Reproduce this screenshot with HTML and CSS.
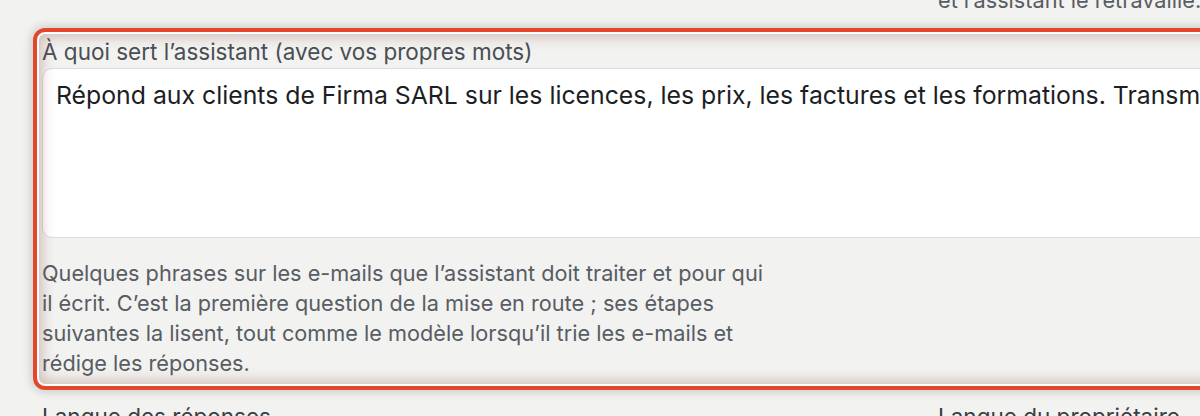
FILE: index.html
```html
<!DOCTYPE html>
<html lang="fr">
<head>
<meta charset="utf-8">
<title>Assistant</title>
<link rel="stylesheet" href="styles.css">
</head>
<body>
<div class="page">
  <div class="row prev">
    <div></div>
    <p class="hint">et l’assistant le retravaille.</p>
  </div>
  <div class="field highlighted">
    <label class="label" for="purpose">À quoi sert l’assistant (avec vos propres mots)</label>
    <textarea id="purpose" class="input" readonly>Répond aux clients de Firma SARL sur les licences, les prix, les factures et les formations. Transmet les demandes techniques à l’équipe support.</textarea>
    <p class="hint narrow">Quelques phrases sur les e-mails que l’assistant doit traiter et pour qui il écrit. C’est la première question de la mise en route ; ses étapes suivantes la lisent, tout comme le modèle lorsqu’il trie les e-mails et rédige les réponses.</p>
  </div>
  <div class="row next">
    <label class="label strong">Langue des réponses</label>
    <label class="label strong">Langue du propriétaire</label>
  </div>
</div>
</body>
</html>
```

FILE: styles.css
```css
html, body {
  margin: 0;
  padding: 0;
  background: #f2f2f0;
  overflow: hidden;
}

body {
  font-family: "Inter", "Noto Sans", "Liberation Sans", sans-serif;
  -webkit-font-smoothing: antialiased;
}

.page {
  width: 2200px;
  padding-left: 39px;
  box-sizing: border-box;
}

.row {
  display: grid;
  grid-template-columns: 848px 1fr;
  column-gap: 48px;
  padding: 0 3px;
}

.prev {
  margin-top: -15px;
}

.hint {
  margin: 0;
  font-size: 21.7px;
  line-height: 30px;
  color: #585c63;
}

.hint.narrow {
  max-width: 728px;
  margin-top: 20px;
}

.field {
  position: relative;
  margin-top: 19px;
  padding: 6px 3px 6px 3px;
}

.field.highlighted::after {
  content: "";
  position: absolute;
  top: -6px;
  left: -6px;
  right: -6px;
  bottom: -6px;
  border: 4px solid #e2472c;
  border-radius: 12px;
  box-shadow:
    inset 0 0 0 2px #ffffff,
    inset 0 0 14px 4px rgba(120, 60, 45, 0.32),
    0 0 10px 2px rgba(0, 0, 0, 0.16);
  pointer-events: none;
}

.label {
  display: block;
  font-size: 22.5px;
  line-height: 24px;
  color: #4a4e55;
  margin-bottom: 4px;
}

.label.strong {
  color: #3a3d42;
  margin-bottom: 0;
}

.input {
  display: block;
  width: 100%;
  height: 170px;
  box-sizing: border-box;
  margin: 0;
  padding: 9px 13px;
  border: 1px solid #dddcd9;
  border-radius: 10px;
  background: #ffffff;
  font-family: "Inter", "Noto Sans", "Liberation Sans", sans-serif;
  font-size: 24.8px;
  line-height: 34px;
  color: #1b1e23;
  resize: none;
  outline: none;
  overflow: hidden;
}

.next {
  margin-top: 21px;
}
```
